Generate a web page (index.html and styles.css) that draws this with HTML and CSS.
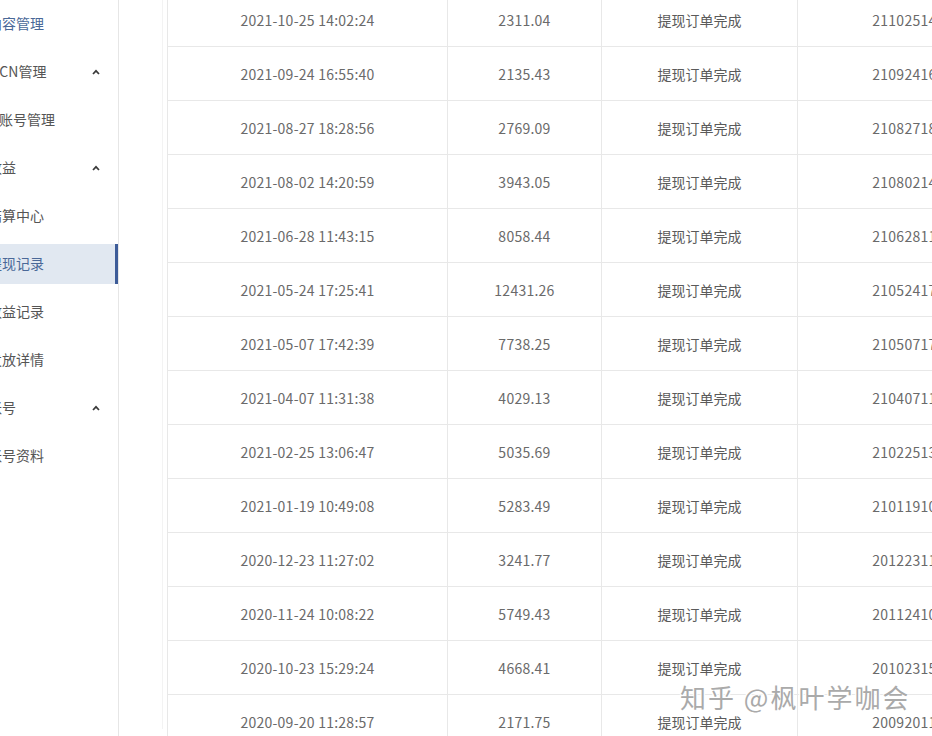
FILE: index.html
```html
<!DOCTYPE html>
<html lang="zh-CN">
<head>
<meta charset="utf-8">
<title>提现记录</title>
<link rel="stylesheet" href="styles.css">
</head>
<body>
<div class="page">
  <aside class="sidebar">
    <ul class="menu">
      <li class="item item-blue"><span class="label">内容管理</span></li>
      <li class="item"><span class="label">MCN管理</span><svg class="caret" width="8" height="6" viewBox="0 0 8 6"><path d="M1 5 L4 1.8 L7 5" fill="none" stroke="#3a3a3a" stroke-width="1.7"/></svg></li>
      <li class="item"><span class="label label-flush">账号管理</span></li>
      <li class="item"><span class="label">收益</span><svg class="caret" width="8" height="6" viewBox="0 0 8 6"><path d="M1 5 L4 1.8 L7 5" fill="none" stroke="#3a3a3a" stroke-width="1.7"/></svg></li>
      <li class="item"><span class="label">结算中心</span></li>
      <li class="item item-active"><span class="label">提现记录</span></li>
      <li class="item"><span class="label">收益记录</span></li>
      <li class="item"><span class="label">发放详情</span></li>
      <li class="item"><span class="label">账号</span><svg class="caret" width="8" height="6" viewBox="0 0 8 6"><path d="M1 5 L4 1.8 L7 5" fill="none" stroke="#3a3a3a" stroke-width="1.7"/></svg></li>
      <li class="item"><span class="label">账号资料</span></li>
    </ul>
  </aside>
  <main class="main">
    <div class="card">
      <div class="table">
        <div class="row"><div class="cell">2021-10-25 14:02:24</div><div class="cell">2311.04</div><div class="cell">提现订单完成</div><div class="cell">21102514022483160259</div></div>
        <div class="row"><div class="cell">2021-09-24 16:55:40</div><div class="cell">2135.43</div><div class="cell">提现订单完成</div><div class="cell">21092416554072815036</div></div>
        <div class="row"><div class="cell">2021-08-27 18:28:56</div><div class="cell">2769.09</div><div class="cell">提现订单完成</div><div class="cell">21082718285619402873</div></div>
        <div class="row"><div class="cell">2021-08-02 14:20:59</div><div class="cell">3943.05</div><div class="cell">提现订单完成</div><div class="cell">21080214205935018467</div></div>
        <div class="row"><div class="cell">2021-06-28 11:43:15</div><div class="cell">8058.44</div><div class="cell">提现订单完成</div><div class="cell">21062811431540275913</div></div>
        <div class="row"><div class="cell">2021-05-24 17:25:41</div><div class="cell">12431.26</div><div class="cell">提现订单完成</div><div class="cell">21052417254168931420</div></div>
        <div class="row"><div class="cell">2021-05-07 17:42:39</div><div class="cell">7738.25</div><div class="cell">提现订单完成</div><div class="cell">21050717423905186374</div></div>
        <div class="row"><div class="cell">2021-04-07 11:31:38</div><div class="cell">4029.13</div><div class="cell">提现订单完成</div><div class="cell">21040711313827640951</div></div>
        <div class="row"><div class="cell">2021-02-25 13:06:47</div><div class="cell">5035.69</div><div class="cell">提现订单完成</div><div class="cell">21022513064791530286</div></div>
        <div class="row"><div class="cell">2021-01-19 10:49:08</div><div class="cell">5283.49</div><div class="cell">提现订单完成</div><div class="cell">21011910490863815724</div></div>
        <div class="row"><div class="cell">2020-12-23 11:27:02</div><div class="cell">3241.77</div><div class="cell">提现订单完成</div><div class="cell">20122311270214096385</div></div>
        <div class="row"><div class="cell">2020-11-24 10:08:22</div><div class="cell">5749.43</div><div class="cell">提现订单完成</div><div class="cell">20112410082257320619</div></div>
        <div class="row"><div class="cell">2020-10-23 15:29:24</div><div class="cell">4668.41</div><div class="cell">提现订单完成</div><div class="cell">20102315292439681502</div></div>
        <div class="row"><div class="cell">2020-09-20 11:28:57</div><div class="cell">2171.75</div><div class="cell">提现订单完成</div><div class="cell">20092011285786054137</div></div>
      </div>
    </div>
  </main>
</div>
<div class="watermark">知乎 @枫叶学咖会</div>
</body>
</html>
```

FILE: styles.css
```css
html, body {
  margin: 0;
  padding: 0;
  background: #ffffff;
  overflow: hidden;
  height: 736px;
}

body {
  font-family: "Noto Sans CJK SC", "Noto Sans", sans-serif;
  font-size: 14px;
  color: #666666;
  position: relative;
}

.page {
  display: flex;
  align-items: stretch;
  height: 736px;
}

.sidebar {
  flex: 0 0 119px;
  box-sizing: border-box;
  border-right: 1px solid #e6e6e6;
  background: #ffffff;
  overflow: hidden;
}

.menu {
  list-style: none;
  margin: 0;
  padding: 4px 0 0 0;
  display: flex;
  flex-direction: column;
  gap: 8px;
}

.item {
  height: 40px;
  display: flex;
  align-items: center;
  justify-content: space-between;
  box-sizing: border-box;
  padding-right: 18px;
  color: #555555;
  white-space: nowrap;
}

.label {
  margin-left: -12px;
  line-height: 38px;
  margin-bottom: 2px;
}

.label-flush {
  margin-left: -1px;
}

.item-blue {
  color: #4a6898;
}

.item-active {
  background: #e1e8f1;
  color: #4a6898;
  border-right: 3px solid #3d5c98;
}

.caret {
  display: block;
  margin-top: -1px;
}

.main {
  flex: 1 1 auto;
  padding-left: 43px;
  overflow: hidden;
}

.card {
  border-left: 1px solid #f3f3f3;
  padding-left: 4px;
  height: 100%;
}

.table {
  margin-top: -7px;
  width: 950px;
}

.row {
  display: grid;
  grid-template-columns: 280px 154px 196px 310px;
  height: 54px;
  box-sizing: border-box;
  border-bottom: 1px solid #e8e8e8;
}

.cell {
  box-sizing: border-box;
  border-left: 1px solid #e8e8e8;
  display: flex;
  align-items: center;
  justify-content: center;
  white-space: nowrap;
  font-size: 14px;
  color: #6a6a6a;
  letter-spacing: 0.25px;
}

.cell:nth-child(3) {
  letter-spacing: 0;
  color: #5a5a5a;
}

.watermark {
  position: absolute;
  left: 680px;
  top: 678px;
  font-size: 26px;
  color: #aaaaaa;
  letter-spacing: 2px;
  white-space: nowrap;
  text-shadow: 1px 1px 0 #ffffff, -1px -1px 0 #ffffff, 1px -1px 0 #ffffff, -1px 1px 0 #ffffff, 0 0 3px #ffffff;
}
```
